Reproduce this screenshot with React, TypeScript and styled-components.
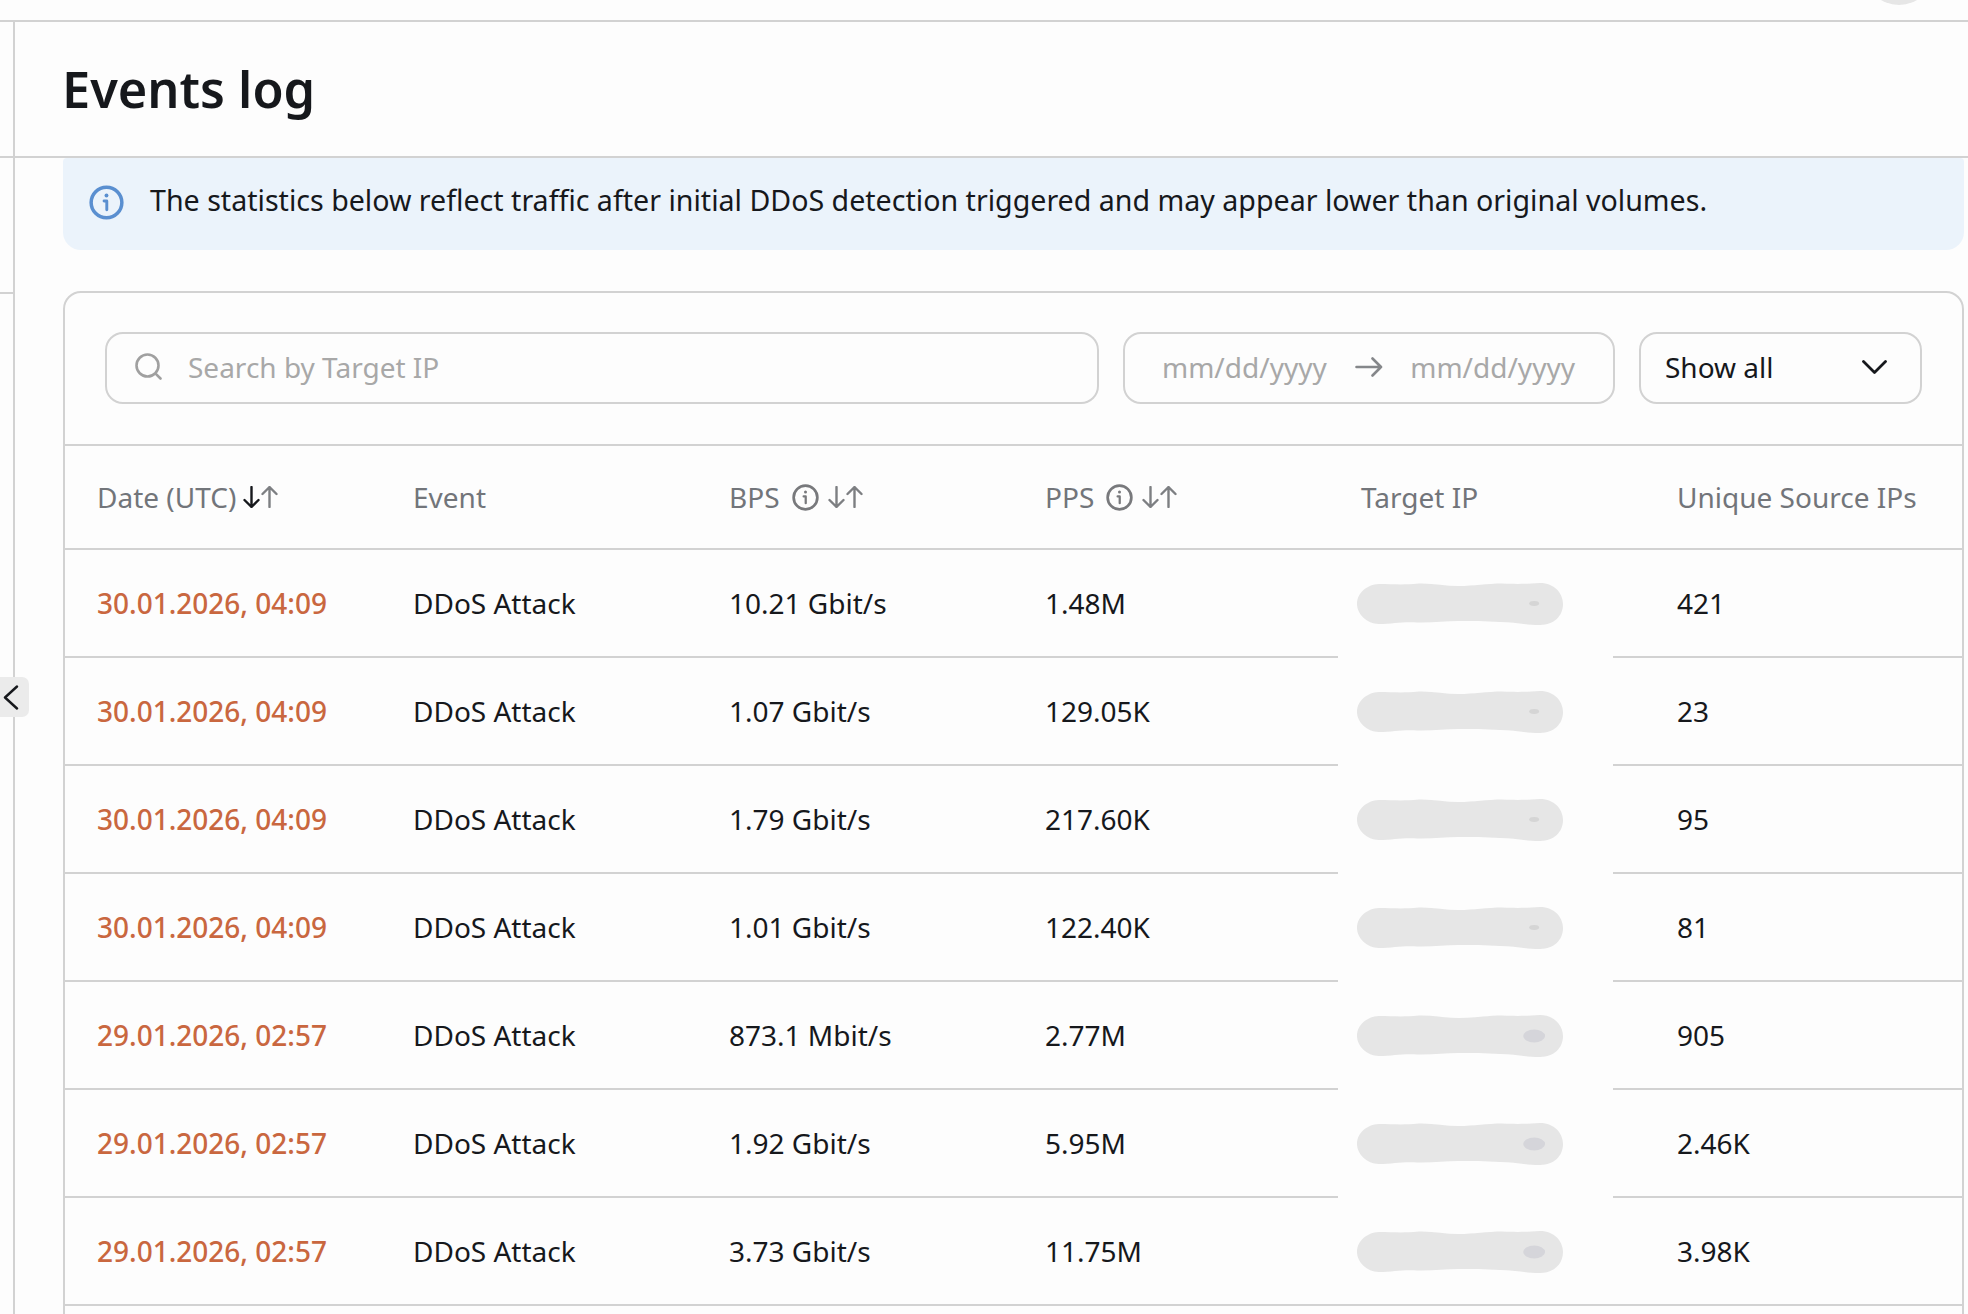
import React from 'react';
import styled, { createGlobalStyle } from 'styled-components';

const GlobalStyle = createGlobalStyle`
  html, body {
    margin: 0;
    padding: 0;
    background: #fdfdfd;
  }
  * {
    box-sizing: border-box;
  }
`;

const line = '#d2d2d2';

const Page = styled.div`
  position: relative;
  width: 1968px;
  height: 1314px;
  overflow: hidden;
  background: #fdfdfd;
  color: #16181c;
  font-family: "Noto Sans", "Open Sans", sans-serif;
`;

const TopBar = styled.div`
  display: flex;
  justify-content: flex-end;
  height: 22px;
  padding-right: 34px;
  border-bottom: 2px solid ${line};
  overflow: hidden;
`;

const Avatar = styled.div`
  width: 70px;
  height: 70px;
  margin-top: -65px;
  border-radius: 50%;
  background: #e6e6e6;
`;

const Body = styled.div`
  display: flex;
`;

const Rail = styled.div`
  flex: none;
  width: 15px;
  height: 1292px;
  border-right: 2px solid ${line};
`;

const RailSection = styled.div<{ $height: number }>`
  height: ${p => p.$height}px;
  border-bottom: 2px solid ${line};
`;

const CollapseButton = styled.button`
  position: absolute;
  left: 0;
  top: 677px;
  display: flex;
  align-items: center;
  width: 29px;
  height: 40px;
  padding: 0 0 0 3px;
  border: none;
  border-radius: 0 7px 7px 0;
  background: #ebebeb;
`;

const Main = styled.div`
  flex: 1;
  min-width: 0;
`;

const Header = styled.div`
  display: flex;
  align-items: center;
  height: 136px;
  padding-left: 47px;
  border-bottom: 2px solid ${line};
`;

const Title = styled.h1`
  margin: 0;
  font-size: 50.5px;
  line-height: 64px;
  font-weight: 600;
  color: #16181c;
`;

const Content = styled.div`
  padding: 0 4px 0 48px;
`;

const Notice = styled.div`
  display: flex;
  align-items: center;
  gap: 26px;
  height: 92px;
  padding: 0 0 9px 26px;
  border-radius: 4px 4px 18px 18px;
  background: #ebf3fb;
  font-size: 28.6px;
  color: #16181c;
`;

const NoticeIcon = styled.div`
  display: flex;
  flex: none;
  margin-top: 5px;
  color: #5a8fd0;
`;

const Card = styled.div`
  margin-top: 41px;
  border: 2px solid ${line};
  border-radius: 18px;
`;

const Filters = styled.div`
  display: flex;
  gap: 24px;
  height: 153px;
  padding: 39px 40px 0;
  border-bottom: 2px solid ${line};
`;

const Field = styled.div`
  display: flex;
  align-items: center;
  height: 72px;
  padding-bottom: 3px;
  border: 2px solid ${line};
  border-radius: 18px;
  font-size: 28px;
`;

const SearchField = styled(Field)`
  width: 994px;
  gap: 26px;
  padding-left: 28px;
  color: #a8a8a8;
`;

const DateField = styled(Field)`
  width: 492px;
  justify-content: space-between;
  padding-left: 37px;
  padding-right: 38px;
  color: #a8a8a8;
`;

const SelectField = styled(Field)`
  flex: 1;
  justify-content: space-between;
  padding-left: 24px;
  padding-right: 33px;
  color: #16181c;
`;

const Row = styled.div<{ $height: number }>`
  display: grid;
  grid-template-columns: repeat(6, 316px);
  align-items: center;
  height: ${p => p.$height}px;
  border-bottom: 2px solid ${line};
`;

const HeadCell = styled.div`
  display: flex;
  align-items: center;
  padding-left: 32px;
  font-size: 28px;
  color: #72757a;
  white-space: nowrap;
`;

const HeadInfo = styled.div`
  display: flex;
  flex: none;
  margin-left: 12px;
  color: #78797c;
`;

const SortIcon = styled.svg<{ $gap: number }>`
  flex: none;
  margin-left: ${p => p.$gap}px;
`;

const Cell = styled.div`
  padding-left: 32px;
  font-size: 28px;
  white-space: nowrap;
`;

const DateCell = styled(Cell)`
  color: #c9673f;
  font-weight: 500;
`;

const TargetCell = styled(Cell)<{ $erase: boolean }>`
  position: relative;
  padding-left: 0;
  height: 100%;
  display: flex;
  align-items: center;
  svg {
    margin: 2px 0 0 28px;
  }
  &::after {
    content: '';
    display: ${p => (p.$erase ? 'block' : 'none')};
    position: absolute;
    left: 9px;
    bottom: -2px;
    width: 275px;
    height: 2px;
    background: #fdfdfd;
  }
`;

function InfoGlyph({ size }: { size: number }) {
  return (
    <svg width={size} height={size} viewBox="0 0 36 36" fill="none" stroke="currentColor" strokeLinecap="round" strokeLinejoin="round">
      <circle cx="18" cy="18" r="15.800" strokeWidth="3.600" />
      <path d="M15.500 16.500H18.300V25.500" strokeWidth="3" />
      <circle cx="18" cy="10.800" r="2" fill="currentColor" stroke="none" />
    </svg>
  );
}

function SearchGlyph() {
  return (
    <svg width="27" height="27" viewBox="0 0 27 27" fill="none" stroke="#a0a0a0" strokeWidth="2.600" strokeLinecap="round">
      <circle cx="12.500" cy="12.500" r="11" />
      <path d="M20.800 20.800 25.500 25.500" />
    </svg>
  );
}

function ArrowGlyph() {
  return (
    <svg width="28" height="20" viewBox="0 0 28 20" fill="none" stroke="#85878a" strokeWidth="2.600" strokeLinecap="round" strokeLinejoin="round">
      <path d="M1.500 10H26M17.500 1.500 26 10l-8.500 8.500" />
    </svg>
  );
}

function ChevronGlyph() {
  return (
    <svg width="25" height="14" viewBox="0 0 25 14" fill="none" stroke="#16181c" strokeWidth="2.800" strokeLinecap="round" strokeLinejoin="round">
      <path d="M1.500 1.500 12.500 12.500 23.500 1.500" />
    </svg>
  );
}

function CollapseGlyph() {
  return (
    <svg width="16" height="25" viewBox="0 0 16 25" fill="none" stroke="#16181c" strokeWidth="2.400" strokeLinecap="round" strokeLinejoin="round">
      <path d="M14 1.500 2 12.500 14 23.500" />
    </svg>
  );
}

function SortArrows({ active, gap }: { active?: boolean; gap: number }) {
  return (
    <SortIcon $gap={gap} width="35" height="22" viewBox="0 0 35 22" fill="none" strokeWidth="2.400" strokeLinecap="round" strokeLinejoin="round">
      <path stroke={active ? '#16181c' : '#7d7f82'} d="M8.500 1v20M1.500 14 8.500 21l7-7" />
      <path stroke="#7d7f82" d="M26.500 21V1M19.500 8l7-7 7 7" />
    </SortIcon>
  );
}

// redacted target IP, the smudge is not a clean pill
function Redaction({ strong }: { strong: boolean }) {
  return (
    <svg width="206" height="42" viewBox="0 0 207 42">
      <path
        d="M22 1C36 1 46 2 62 .5C76 0 88 3 102 3C118 3 130 .5 146 .5C160 1 168 1 184 0C198 0 207 10 207 21C207 33 198 42 184 42C168 42 158 39 144 39C128 38 116 38 102 38C88 38 76 40 60 39.500C46 38.500 36 41 22 41C10 41 0 31 0 21C0 10 10 1.500 22 1Z"
        fill="#e6e6e6"
      />
      {strong ? (
        <ellipse cx="178" cy="21" rx="11" ry="6.500" fill="#d5d5da" />
      ) : (
        <ellipse cx="178" cy="20.500" rx="5" ry="2.500" fill="#d5d5d5" />
      )}
    </svg>
  );
}

const events = [
  { date: '30.01.2026, 04:09', bps: '10.21 Gbit/s', pps: '1.48M', sources: '421' },
  { date: '30.01.2026, 04:09', bps: '1.07 Gbit/s', pps: '129.05K', sources: '23' },
  { date: '30.01.2026, 04:09', bps: '1.79 Gbit/s', pps: '217.60K', sources: '95' },
  { date: '30.01.2026, 04:09', bps: '1.01 Gbit/s', pps: '122.40K', sources: '81' },
  { date: '29.01.2026, 02:57', bps: '873.1 Mbit/s', pps: '2.77M', sources: '905' },
  { date: '29.01.2026, 02:57', bps: '1.92 Gbit/s', pps: '5.95M', sources: '2.46K' },
  { date: '29.01.2026, 02:57', bps: '3.73 Gbit/s', pps: '11.75M', sources: '3.98K' },
];

export default function App() {
  return (
    <Page>
      <GlobalStyle />
      <TopBar>
        <Avatar />
      </TopBar>
      <Body>
        <Rail>
          <RailSection $height={136} />
          <RailSection $height={136} />
        </Rail>
        <CollapseButton>
          <CollapseGlyph />
        </CollapseButton>
        <Main>
          <Header>
            <Title>Events log</Title>
          </Header>
          <Content>
            <Notice>
              <NoticeIcon>
                <InfoGlyph size={35} />
              </NoticeIcon>
              <span>The statistics below reflect traffic after initial DDoS detection triggered and may appear lower than original volumes.</span>
            </Notice>
            <Card>
              <Filters>
                <SearchField>
                  <SearchGlyph />
                  <span>Search by Target IP</span>
                </SearchField>
                <DateField>
                  <span>mm/dd/yyyy</span>
                  <ArrowGlyph />
                  <span>mm/dd/yyyy</span>
                </DateField>
                <SelectField>
                  <span>Show all</span>
                  <ChevronGlyph />
                </SelectField>
              </Filters>
              <Row $height={104}>
                <HeadCell>
                  Date (UTC)
                  <SortArrows active gap={7} />
                </HeadCell>
                <HeadCell>Event</HeadCell>
                <HeadCell>
                  BPS
                  <HeadInfo>
                    <InfoGlyph size={27} />
                  </HeadInfo>
                  <SortArrows gap={9} />
                </HeadCell>
                <HeadCell>
                  PPS
                  <HeadInfo>
                    <InfoGlyph size={27} />
                  </HeadInfo>
                  <SortArrows gap={9} />
                </HeadCell>
                <HeadCell>Target IP</HeadCell>
                <HeadCell>Unique Source IPs</HeadCell>
              </Row>
              {events.map((ev, i) => (
                <Row $height={108} key={i}>
                  <DateCell>{ev.date}</DateCell>
                  <Cell>DDoS Attack</Cell>
                  <Cell>{ev.bps}</Cell>
                  <Cell>{ev.pps}</Cell>
                  <TargetCell $erase={i < events.length - 1}>
                    <Redaction strong={i >= 4} />
                  </TargetCell>
                  <Cell>{ev.sources}</Cell>
                </Row>
              ))}
              <Row $height={108} />
            </Card>
          </Content>
        </Main>
      </Body>
    </Page>
  );
}
